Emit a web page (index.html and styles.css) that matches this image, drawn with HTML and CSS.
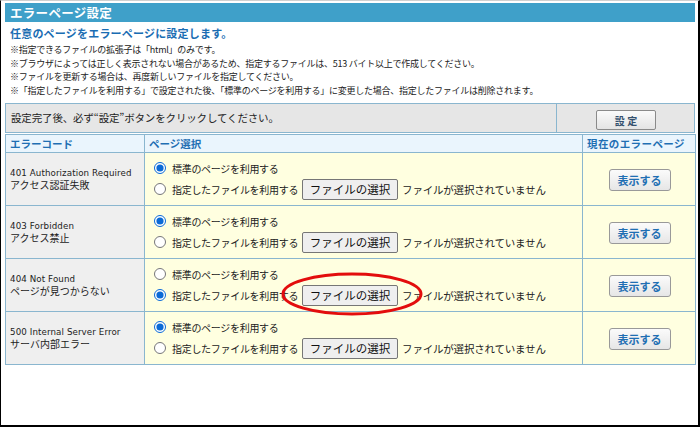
FILE: index.html
```html
<!DOCTYPE html>
<html lang="ja">
<head>
<meta charset="utf-8">
<title>エラーページ設定</title>
<link rel="stylesheet" href="styles.css">
</head>
<body>
<div class="frame">
  <div class="titlebar">エラーページ設定</div>
  <div class="content">
    <h2 class="lead">任意のページをエラーページに設定します。</h2>
    <ul class="notes">
      <li>※指定できるファイルの拡張子は「html」のみです。</li>
      <li>※ブラウザによっては正しく表示されない場合があるため、指定するファイルは、513 バイト以上で作成してください。</li>
      <li>※ファイルを更新する場合は、再度新しいファイルを指定してください。</li>
      <li>※「指定したファイルを利用する」で設定された後、「標準のページを利用する」に変更した場合、指定したファイルは削除されます。</li>
    </ul>
  </div>
  <table class="settings">
    <tr>
      <td class="msg">設定完了後、必ず“設定”ボタンをクリックしてください。</td>
      <td class="act"><button class="btn-set">設 定</button></td>
    </tr>
  </table>
  <table class="grid">
    <thead>
      <tr>
        <th class="c1">エラーコード</th>
        <th class="c2">ページ選択</th>
        <th class="c3">現在のエラーページ</th>
      </tr>
    </thead>
    <tbody>
      <tr>
        <td class="code"><span class="en">401 Authorization Required</span><br>アクセス認証失敗</td>
        <td class="sel">
          <label class="opt"><input type="radio" name="r401" checked>標準のページを利用する</label>
          <label class="opt"><input type="radio" name="r401">指定したファイルを利用する<span class="file"><span class="fbtn">ファイルの選択</span><span class="fname">ファイルが選択されていません</span></span></label>
        </td>
        <td class="cur"><button class="btn-show">表示する</button></td>
      </tr>
      <tr>
        <td class="code"><span class="en">403 Forbidden</span><br>アクセス禁止</td>
        <td class="sel">
          <label class="opt"><input type="radio" name="r403" checked>標準のページを利用する</label>
          <label class="opt"><input type="radio" name="r403">指定したファイルを利用する<span class="file"><span class="fbtn">ファイルの選択</span><span class="fname">ファイルが選択されていません</span></span></label>
        </td>
        <td class="cur"><button class="btn-show">表示する</button></td>
      </tr>
      <tr>
        <td class="code"><span class="en">404 Not Found</span><br>ページが見つからない</td>
        <td class="sel">
          <label class="opt"><input type="radio" name="r404">標準のページを利用する</label>
          <label class="opt"><input type="radio" name="r404" checked>指定したファイルを利用する<span class="file"><span class="fbtn">ファイルの選択</span><span class="fname">ファイルが選択されていません</span></span></label>
        </td>
        <td class="cur"><button class="btn-show">表示する</button></td>
      </tr>
      <tr>
        <td class="code"><span class="en">500 Internal Server Error</span><br>サーバ内部エラー</td>
        <td class="sel">
          <label class="opt"><input type="radio" name="r500" checked>標準のページを利用する</label>
          <label class="opt"><input type="radio" name="r500">指定したファイルを利用する<span class="file"><span class="fbtn">ファイルの選択</span><span class="fname">ファイルが選択されていません</span></span></label>
        </td>
        <td class="cur"><button class="btn-show">表示する</button></td>
      </tr>
    </tbody>
  </table>
  <svg class="mark" width="146" height="48" viewBox="0 0 146 48" aria-hidden="true">
    <ellipse cx="73" cy="24" rx="69" ry="20" fill="none" stroke="#e30d0d" stroke-width="3"/>
  </svg>
</div>
</body>
</html>
```

FILE: styles.css
```css
* { box-sizing: border-box; }
html, body { margin: 0; padding: 0; background: #fff; }
body {
  font-family: "Noto Sans CJK JP", "Noto Sans", sans-serif;
  color: #222;
}
.frame {
  position: relative;
  width: 700px;
  height: 427px;
  border-left: 1px solid #000;
  border-right: 2px solid #000;
  border-bottom: 2px solid #000;
  border-top: 1px solid #d0d0d0;
  padding: 2px 3px 0 4px;
  overflow: hidden;
}
.titlebar {
  height: 19px;
  background: #3fa0c9;
  color: #fff;
  font-weight: bold;
  font-size: 12.5px;
  line-height: 19px;
  padding-left: 5px;
  letter-spacing: 0.3px;
}
.content { padding-left: 5px; }
.lead {
  margin: 3px 0 0;
  font-size: 11px;
  line-height: 16px;
  font-weight: bold;
  color: #1a6db3;
  letter-spacing: 0.2px;
}
.notes {
  list-style: none;
  margin: 2px 0 0;
  padding: 0;
  font-size: 9px;
  line-height: 13.7px;
  color: #222;
  letter-spacing: -0.25px;
}
.settings, .grid {
  width: 690px;
  border-collapse: collapse;
  table-layout: fixed;
}
.settings {
  margin-top: 5px;
  background: #e6e6e6;
}
.settings td {
  border: 1px solid #8ab6cf;
  height: 29px;
  padding: 0;
  vertical-align: middle;
}
.settings .msg {
  width: 551px;
  padding-left: 5px;
  font-size: 10.5px;
  color: #222;
  letter-spacing: -0.15px;
}
.settings .act { text-align: center; }
.btn-set {
  width: 60px;
  height: 20px;
  padding: 0;
  font-family: inherit;
  font-size: 10px;
  font-weight: bold;
  color: #34506e;
  background: linear-gradient(#fafafa, #e4e4e4);
  border: 1px solid #8a8a8a;
  border-radius: 2px;
  margin-left: 1px;
}
.grid { margin-top: 1px; }
.grid th, .grid td {
  border: 1px solid #8ab6cf;
  padding: 0;
}
.grid th {
  height: 18px;
  background: #eaf5fd;
  color: #1f6fb3;
  font-size: 10.5px;
  font-weight: bold;
  text-align: left;
  padding-left: 4px;
}
.grid .c1 { width: 139px; }
.grid .c2 { width: 438px; }
.grid .c3 { width: 113px; padding-left: 4px; letter-spacing: 0.4px; }
.grid td { height: 53px; vertical-align: middle; }
.grid .code {
  background: #efefef;
  padding-left: 4px;
  font-size: 10px;
  line-height: 12px;
  color: #222;
}
.code .en {
  font-family: "DejaVu Sans", sans-serif;
  font-size: 8.7px;
  letter-spacing: 0.1px;
}
.grid .sel, .grid .cur { background: #ffffe0; }
.grid .sel { padding-left: 9px; }
.opt {
  display: flex;
  align-items: center;
  height: 21px;
  font-size: 10px;
  color: #222;
  letter-spacing: -0.3px;
}
.opt input {
  width: 12px;
  height: 12px;
  margin: 0 6px 0 0;
  accent-color: #0b6ad6;
}
.file {
  display: inline-flex;
  align-items: center;
  margin-left: 4px;
  letter-spacing: 0;
}
.fbtn {
  display: inline-block;
  width: 96px;
  height: 21px;
  line-height: 19px;
  text-align: center;
  font-size: 11.5px;
  color: #111;
  background: #efefef;
  border: 1px solid #767676;
  border-radius: 2px;
}
.fname {
  margin-left: 4px;
  font-size: 10.5px;
  letter-spacing: -0.2px;
}
.grid .cur { text-align: center; padding-left: 1px; }
.btn-show {
  width: 62px;
  height: 22px;
  padding: 0;
  font-family: inherit;
  font-size: 11px;
  font-weight: bold;
  color: #1f6fb3;
  background: linear-gradient(#fbfbfb, #e6e6e6);
  border: 1px solid #999;
  border-radius: 3px;
}
.mark {
  position: absolute;
  left: 278px;
  top: 269px;
}
```
